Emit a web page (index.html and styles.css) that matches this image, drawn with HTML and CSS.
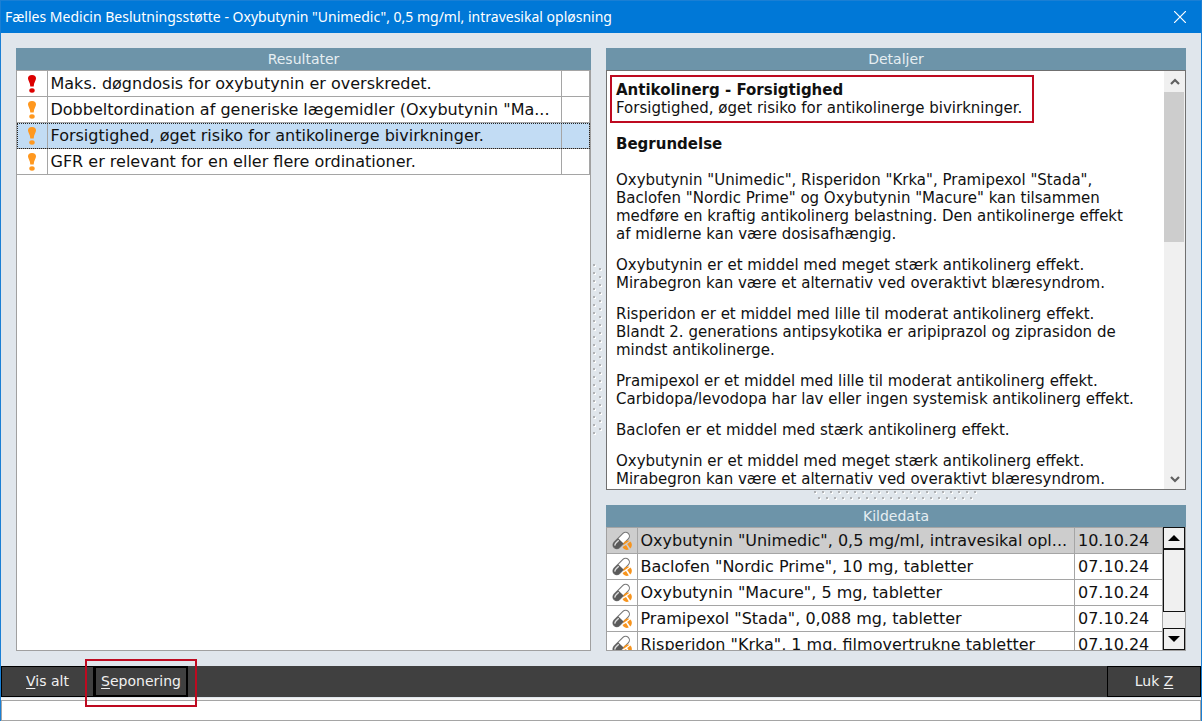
FILE: index.html
```html
<!DOCTYPE html>
<html lang="da">
<head>
<meta charset="utf-8">
<title>Fælles Medicin Beslutningsstøtte</title>
<link rel="stylesheet" href="styles.css">
</head>
<body>
<svg class="defs" aria-hidden="true">
  <symbol id="warn" viewBox="0 0 10 20">
    <path d="M5 1C7.600 1 9.300 2.500 9 4.800C8.700 7 6.900 8.500 6.700 12.500H3.300C3.100 8.500 1.300 7 1 4.800C0.700 2.500 2.400 1 5 1Z"/>
    <ellipse cx="5" cy="16.500" rx="2.700" ry="2.200"/>
  </symbol>
  <symbol id="pill" viewBox="0 0 20 20">
    <g transform="rotate(-45 9 10)">
      <rect x="-0.500" y="6" width="20" height="7.600" rx="3.800" fill="#fff" stroke="#777" stroke-width="1.100"/>
      <path d="M9 6H3.300A3.800 3.800 0 0 0 3.300 13.600H9Z" fill="#5a5a5a"/>
      <path d="M1.500 9Q2.300 7.800 4 7.800H8" fill="none" stroke="#ddd" stroke-width="1.400"/>
    </g>
    <path d="M11.200 14.200A4.600 4.600 0 0 1 17.500 9.800Z" fill="#f7941d"/>
    <path d="M18.400 10.600A4.600 4.600 0 0 1 18.200 17.500L15.200 13Z" fill="#f7941d"/>
    <path d="M10.500 16L14 13.900L16.800 18.400A4.600 4.600 0 0 1 10.500 16Z" fill="#f7941d"/>
  </symbol>
  <pattern id="dots-v" width="11" height="8" patternUnits="userSpaceOnUse">
    <path d="M2 1h2v2h-2zM8 5h2v2h-2z" fill="#fff"/>
    <path d="M1 0h2v2h-2zM7 4h2v2h-2z" fill="#b0b2b5"/>
  </pattern>
  <pattern id="dots-h" width="8" height="11" patternUnits="userSpaceOnUse">
    <path d="M1 2h2v2h-2zM5 8h2v2h-2z" fill="#fff"/>
    <path d="M0 1h2v2h-2zM4 7h2v2h-2z" fill="#b0b2b5"/>
  </pattern>
</svg>
<div class="window">
  <header class="titlebar">
    <h1 class="title">Fælles Medicin Beslutningsstøtte - Oxybutynin "Unimedic", 0,5 mg/ml, intravesikal opløsning</h1>
    <button class="close" aria-label="Luk vindue"><svg width="12" height="12" viewBox="0 0 12 12"><path d="M0 0L12 12M12 0L0 12" stroke="#fff" stroke-width="1.200"/></svg></button>
  </header>
  <main class="content">
    <section class="panel results">
      <h2 class="panel-title">Resultater</h2>
      <div class="panel-body">
        <table class="grid">
          <colgroup><col class="col-icon"><col><col class="col-end"></colgroup>
          <tr><td class="icon"><svg class="warn red"><use href="#warn"/></svg></td><td>Maks. døgndosis for oxybutynin er overskredet.</td><td></td></tr>
          <tr><td class="icon"><svg class="warn"><use href="#warn"/></svg></td><td>Dobbeltordination af generiske lægemidler (Oxybutynin "Ma...</td><td></td></tr>
          <tr class="active"><td class="icon"><svg class="warn"><use href="#warn"/></svg></td><td>Forsigtighed, øget risiko for antikolinerge bivirkninger.</td><td></td></tr>
          <tr><td class="icon"><svg class="warn"><use href="#warn"/></svg></td><td>GFR er relevant for en eller flere ordinationer.</td><td></td></tr>
        </table>
      </div>
    </section>
    <div class="splitter-v"><svg width="11" height="172"><rect width="11" height="172" fill="url(#dots-v)"/></svg></div>
    <div class="right">
      <section class="panel details">
        <h2 class="panel-title">Detaljer</h2>
        <div class="panel-body detail-body">
          <article class="detail-text">
            <div class="marked"><h3>Antikolinerg - Forsigtighed</h3>Forsigtighed, øget risiko for antikolinerge bivirkninger.</div>
            <h3 class="reason">Begrundelse</h3>
            <p>Oxybutynin "Unimedic", Risperidon "Krka", Pramipexol "Stada",<br>Baclofen "Nordic Prime" og Oxybutynin "Macure" kan tilsammen<br>medføre en kraftig antikolinerg belastning. Den antikolinerge effekt<br>af midlerne kan være dosisafhængig.</p>
            <p>Oxybutynin er et middel med meget stærk antikolinerg effekt.<br>Mirabegron kan være et alternativ ved overaktivt blæresyndrom.</p>
            <p>Risperidon er et middel med lille til moderat antikolinerg effekt.<br>Blandt 2. generations antipsykotika er aripiprazol og ziprasidon de<br>mindst antikolinerge.</p>
            <p>Pramipexol er et middel med lille til moderat antikolinerg effekt.<br>Carbidopa/levodopa har lav eller ingen systemisk antikolinerg effekt.</p>
            <p>Baclofen er et middel med stærk antikolinerg effekt.</p>
            <p>Oxybutynin er et middel med meget stærk antikolinerg effekt.<br>Mirabegron kan være et alternativ ved overaktivt blæresyndrom.</p>
          </article>
          <div class="scroll">
            <button class="scroll-btn" aria-label="Rul op"><svg width="10" height="8" viewBox="0 0 10 8"><path d="M1 6L5 2L9 6" fill="none" stroke="#606060" stroke-width="2.200"/></svg></button>
            <div class="scroll-track"><div class="scroll-thumb"></div></div>
            <button class="scroll-btn" aria-label="Rul ned"><svg width="10" height="8" viewBox="0 0 10 8"><path d="M1 2L5 6L9 2" fill="none" stroke="#606060" stroke-width="2.200"/></svg></button>
          </div>
        </div>
      </section>
      <div class="splitter-h"><svg width="164" height="11"><rect width="164" height="11" fill="url(#dots-h)"/></svg></div>
      <section class="panel sources">
        <h2 class="panel-title">Kildedata</h2>
        <div class="panel-body source-body">
          <div class="source-list">
            <table class="grid">
              <colgroup><col class="col-icon"><col><col class="col-date"></colgroup>
              <tr class="current"><td class="icon"><svg class="pill"><use href="#pill"/></svg></td><td>Oxybutynin "Unimedic", 0,5 mg/ml, intravesikal opl...</td><td>10.10.24</td></tr>
              <tr><td class="icon"><svg class="pill"><use href="#pill"/></svg></td><td>Baclofen "Nordic Prime", 10 mg, tabletter</td><td>07.10.24</td></tr>
              <tr><td class="icon"><svg class="pill"><use href="#pill"/></svg></td><td>Oxybutynin "Macure", 5 mg, tabletter</td><td>07.10.24</td></tr>
              <tr><td class="icon"><svg class="pill"><use href="#pill"/></svg></td><td>Pramipexol "Stada", 0,088 mg, tabletter</td><td>07.10.24</td></tr>
              <tr><td class="icon"><svg class="pill"><use href="#pill"/></svg></td><td>Risperidon "Krka", 1 mg, filmovertrukne tabletter</td><td>07.10.24</td></tr>
            </table>
          </div>
          <div class="scroll classic">
            <button class="scroll-btn" aria-label="Rul op"><svg width="12" height="6" viewBox="0 0 12 6"><path d="M0 6L6 0L12 6Z"/></svg></button>
            <div class="scroll-track"><div class="scroll-thumb"></div></div>
            <button class="scroll-btn" aria-label="Rul ned"><svg width="12" height="6" viewBox="0 0 12 6"><path d="M0 0L6 6L12 0Z"/></svg></button>
          </div>
        </div>
      </section>
    </div>
  </main>
  <nav class="toolbar">
    <button class="tool show-all"><span><u>V</u>is alt</span></button>
    <div class="highlighted"><button class="tool stop"><span><u>S</u>eponering</span></button></div>
    <button class="tool shut"><span>Luk <u>Z</u></span></button>
  </nav>
  <footer class="status"></footer>
</div>
</body>
</html>
```

FILE: styles.css
```css
* { box-sizing: border-box; }
body {
  margin: 0;
  font-family: "DejaVu Sans", Verdana, sans-serif;
  font-size: 16px;
  color: #111;
}
h1, h2, h3, p { margin: 0; font-size: inherit; }
button { font: inherit; color: inherit; padding: 0; margin: 0; border: 0; background: none; }
svg { display: block; }
.defs { position: absolute; width: 0; height: 0; }

.window {
  display: flex;
  flex-direction: column;
  height: 100vh;
  background: #e0e6ec;
  border: 1px solid #1a7fd4;
  border-bottom-width: 0;
  overflow: hidden;
}
.titlebar {
  display: flex;
  align-items: center;
  justify-content: space-between;
  height: 32px;
  padding: 0 15px 0 4px;
  background: #0078d7;
  color: #fff;
  flex: none;
}
.title { font: 400 14px/20px "Noto Sans", "Open Sans", sans-serif; white-space: nowrap; }
.close { display: flex; }

.content { display: flex; flex: 1; min-height: 0; padding: 15px; }
.panel { display: flex; flex-direction: column; min-width: 0; min-height: 0; }
.panel-title {
  flex: none;
  height: 22px;
  background: #6d94a9;
  color: #e6eef2;
  font-weight: 400;
  font-size: 14px;
  line-height: 22px;
  text-align: center;
}
.panel-body { flex: 1; min-height: 0; background: #fff; border: 1px solid #a0a0a0; border-top: 0; overflow: hidden; }
.results { flex: 575 1 0; }
.right { flex: 580 1 0; display: flex; flex-direction: column; min-width: 0; }

.splitter-v { display: flex; width: 15px; padding-left: 1px; align-items: center; flex: none; }
.splitter-h { display: flex; height: 15px; justify-content: center; flex: none; }

.grid { width: 100%; table-layout: fixed; border-collapse: collapse; }
.grid td {
  height: 26px;
  padding: 0 2px 0 3px;
  line-height: 25px;
  border: 1px solid #a5a5a5;
  border-left-width: 0;
  white-space: nowrap;
  overflow: hidden;
}
.grid td.icon { padding: 0; }
.col-icon { width: 30px; }
.col-end { width: 28px; }
.col-date { width: 88px; }
.active { background: #c2dcf4; outline: 1px dotted #222; outline-offset: -1px; }
.current { background: #cdcdcd; }
.warn { width: 10px; height: 20px; margin: 0 auto; fill: #ff981f; }
.warn.red { fill: #dc0000; }
.pill { width: 20px; height: 20px; margin: 0 auto; }

.details { flex: 442 1 0; }
.detail-body { display: flex; border: 1px solid #707070; }
.detail-text { flex: 1; min-width: 0; padding: 4px 0 0 3px; font-size: 15px; line-height: 18px; white-space: nowrap; overflow: hidden; }
.detail-text h3 { font-weight: 700; }
.detail-text p { margin: 0 0 13px 6px; }
.marked { width: fit-content; padding: 4px 10px 4px 4px; border: 2px solid #be0a20; }
.detail-text .reason { margin: 12px 0 18px 6px; }

.scroll { display: flex; flex-direction: column; flex: none; width: 21px; background: #f0f0f0; }
.scroll-btn { display: flex; align-items: center; justify-content: center; height: 21px; flex: none; }
.scroll-track { flex: 1; min-height: 0; }
.scroll-thumb { height: 40%; background: #cdcdcd; margin-right: 1px; }

.sources { flex: 146 1 0; }
.source-body { display: flex; }
.source-list { flex: 1; min-width: 0; overflow: hidden; }
.classic { width: 22px; }
.classic .scroll-btn { height: 22px; background: #f0f0f0; border: 1px solid #111; }
.classic .scroll-thumb { height: 80%; margin: 0; background: #f0f0f0; border: 1px solid #111; }

.toolbar { display: flex; flex: none; height: 31px; background: #404040; color: #f0f0f0; font-size: 14px; }
.tool { display: flex; align-items: center; justify-content: center; height: 31px; padding-bottom: 1px; background: #404040; border: 1px solid #000; }
.tool u { text-underline-offset: 2px; }
.show-all { width: 93px; }
.highlighted { position: relative; }
.highlighted::after { content: ""; position: absolute; inset: -7px -9px -10px -9px; border: 2px solid #be0a20; pointer-events: none; }
.stop { width: 94px; border-width: 2px; }
.shut { width: 94px; margin-left: auto; }
.status { flex: none; height: 21px; margin-top: 3px; background: #fff; border: 1px solid #a5a5a5; box-shadow: 0 -2px #f4f4f4; }
```
